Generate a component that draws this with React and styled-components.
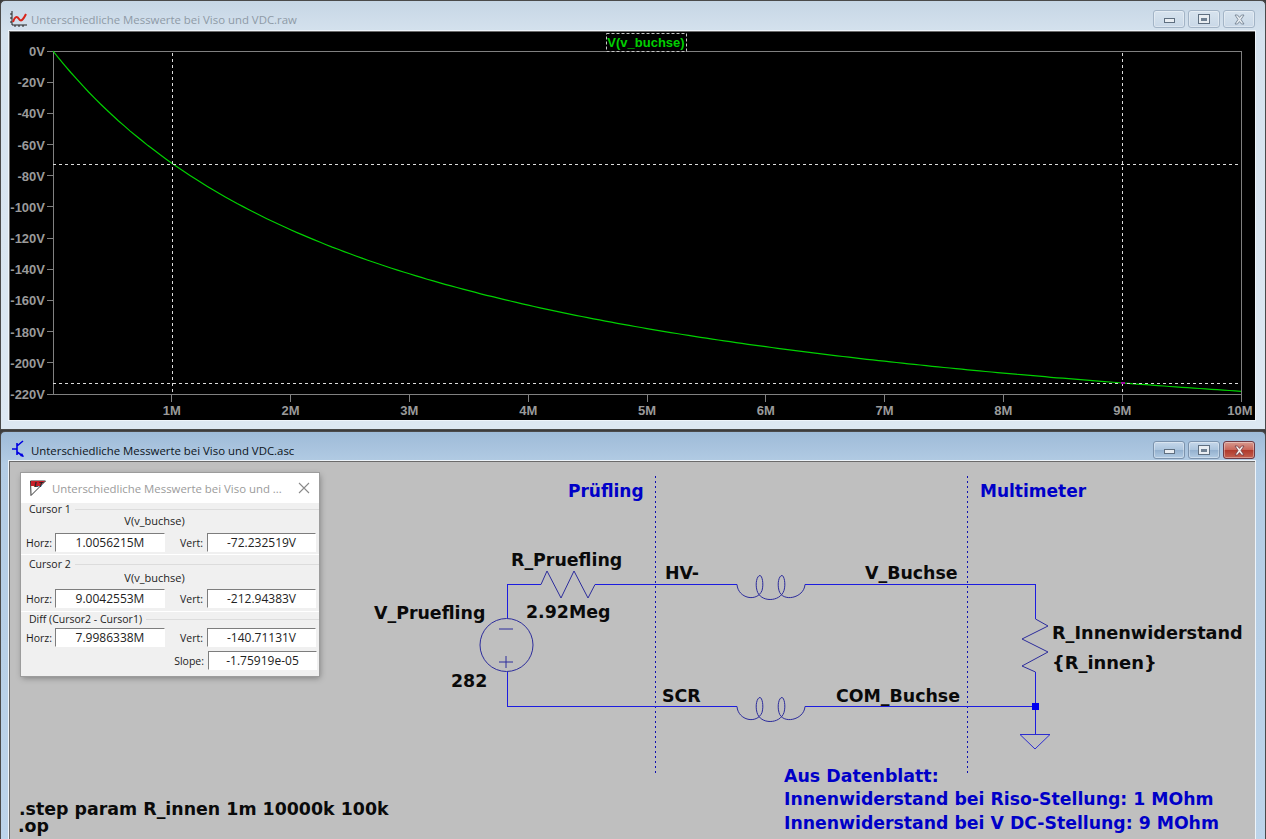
import React from 'react';
import styled, { createGlobalStyle } from 'styled-components';

const GlobalStyle = createGlobalStyle`
  html, body {
    margin: 0;
    height: 100%;
    overflow: hidden;
    background: #3c3c3c;
  }
  * { box-sizing: border-box; }
`;

const Desktop = styled.div`
  width: 1266px;
  height: 839px;
  display: flex;
  flex-direction: column;
  gap: 1px;
  font-family: "Open Sans", "Noto Sans", sans-serif;
`;

const Window = styled.div`
  height: ${(p) => p.$height}px;
  flex: none;
  display: flex;
  flex-direction: column;
  padding: 0 10px ${(p) => (p.$active ? 0 : 9)}px 8px;
  background: ${(p) =>
    p.$active
      ? 'linear-gradient(180deg, #9ebbd8 0, #b3cce4 32px, #bdd4ea 100%)'
      : 'linear-gradient(180deg, #c6d6e5 0, #d5e2ee 32px, #dde8f2 100%)'};
  border: 1px solid #4a4a4a;
  border-width: 1px 1px ${(p) => (p.$active ? 0 : 1)}px 1px;
  border-radius: 5px 5px 0 0;
`;

const TitleBar = styled.div`
  height: ${(p) => (p.$active ? 29 : 30)}px;
  flex: none;
  display: flex;
  align-items: center;
  gap: 3px;
  padding: 5px 0 0 1px;
`;

const TitleText = styled.div`
  flex: 1;
  font-size: 11.4px;
  padding-top: 2px;
  color: ${(p) => (p.$active ? '#0c1420' : '#8e9aa6')};
`;

const Controls = styled.div`
  display: flex;
  gap: 3px;
  align-self: flex-start;
  margin-top: 4px;
`;

const CtrlButton = styled.div`
  width: 32px;
  height: 18px;
  display: flex;
  align-items: center;
  justify-content: center;
  border-radius: 3px;
  border: 1px solid ${(p) => (p.$close ? '#6e3a44' : p.$active ? '#7c93ad' : '#a3b4c6')};
  box-shadow: inset 0 0 0 1px rgba(255, 255, 255, 0.35);
  background: ${(p) =>
    p.$close
      ? 'linear-gradient(180deg, #d79a90 0, #c9675a 48%, #b03a2c 52%, #c4604f 100%)'
      : p.$active
        ? 'linear-gradient(180deg, #c6d8ea 0, #acc5de 48%, #94b1cf 52%, #b2cbe3 100%)'
        : 'linear-gradient(180deg, #d7e3ee 0, #c9d8e7 100%)'};
`;

const MinGlyph = styled.div`
  width: 11px;
  height: 5px;
  margin-top: 3px;
  background: #e8edf2;
  border: 1px solid #5f6f80;
`;

const MaxGlyph = styled.div`
  width: 12px;
  height: 10px;
  background: #e8edf2;
  border: 1px solid #5f6f80;
  display: flex;
  align-items: center;
  justify-content: center;
  &::after {
    content: '';
    width: 6px;
    height: 3px;
    background: #6f8092;
  }
`;

const Client = styled.div`
  flex: 1;
  min-height: 0;
  position: relative;
  overflow: hidden;
  background: ${(p) => p.$bg};
  border: 1px solid #6a6a6a;
  border-width: 1px 0 0 1px;
  outline: 1px solid #eef4fa;
`;

const Drawing = styled.svg`
  display: block;
  width: 100%;
  height: 100%;
  position: absolute;
  inset: 0;
`;

const AxisLabel = styled.text`
  font-family: "Liberation Sans", Arial, sans-serif;
  font-size: 13px;
  font-weight: 700;
  fill: #9a9a9a;
`;

const TraceLabel = styled.text`
  font-family: "Liberation Sans", Arial, sans-serif;
  font-size: 13px;
  font-weight: 700;
  fill: #00d000;
`;

const NetLabel = styled.text`
  font-family: "DejaVu Sans", "Noto Sans", sans-serif;
  font-size: ${(p) => p.$size || 17.4}px;
  font-weight: 700;
  fill: ${(p) => (p.$blue ? '#0000c8' : '#0a0a0a')};
`;

/* cursor readout dialog floats over the schematic */
const CursorDialog = styled.div`
  position: absolute;
  left: 11px;
  top: 11px;
  width: 298px;
  height: 203px;
  background: #f0f0f0;
  box-shadow: 0 0 0 1px #9c9c9c, 1px 2px 6px rgba(0, 0, 0, 0.35);
  display: flex;
  flex-direction: column;
  font-size: 10.5px;
  color: #1c1c1c;
`;

const DialogTitle = styled.div`
  height: 30px;
  flex: none;
  background: #fff;
  display: flex;
  align-items: center;
  gap: 6px;
  padding: 0 9px 0 8px;
  font-size: 11.4px;
  color: #9b9b9b;
`;

const DialogTitleText = styled.div`
  flex: 1;
  white-space: nowrap;
`;

const Group = styled.div`
  position: relative;
  height: ${(p) => p.$height}px;
  padding: ${(p) => p.$top}px 2px 0 5px;
  display: flex;
  flex-direction: column;
  gap: ${(p) => p.$gap}px;
  border-bottom: ${(p) => (p.$last ? 'none' : '1px solid #fff')};
`;

const Legend = styled.div`
  position: absolute;
  left: 0;
  right: 0;
  top: ${(p) => p.$top}px;
  display: flex;
  align-items: center;
  gap: 4px;
  padding-left: 8px;
  line-height: 13px;
  &::after {
    content: '';
    flex: 1;
    height: 1px;
    background: #dcdcdc;
  }
`;

const TraceName = styled.div`
  height: 13px;
  line-height: 13px;
  font-size: 11px;
  text-align: center;
  margin-right: 34px;
`;

const FieldRow = styled.div`
  display: flex;
  align-items: center;
  justify-content: ${(p) => (p.$end ? 'flex-end' : 'flex-start')};
  height: 19px;
  flex: none;
`;

const FieldLabel = styled.div`
  width: ${(p) => p.$width}px;
  text-align: right;
  padding-right: 4px;
`;

const Field = styled.div`
  width: ${(p) => p.$width}px;
  height: 19px;
  line-height: 18px;
  text-align: center;
  background: #fff;
  font-size: 12px;
  border: 1px solid #fff;
  border-top-color: #7d7d7d;
  border-left-color: #7d7d7d;
  color: #222;
`;

const CHART = { left: 53, right: 1241, top: 51, bottom: 394 };
const PX_PER_VOLT = (CHART.bottom - CHART.top) / 220;
const PX_PER_MEG = (CHART.right - CHART.left) / 10;
const voltY = (v) => CHART.top - v * PX_PER_VOLT;
const megX = (m) => CHART.left + m * PX_PER_MEG;
// divider: 282V over 2.92Meg and the meter input
const divider = (m) => (-282 * m) / (m + 2.92);

const curve = Array.from({ length: 201 }, (_, i) => {
  const m = i / 20;
  return `${megX(m).toFixed(1)},${voltY(divider(m)).toFixed(1)}`;
}).join(' ');

const voltTicks = Array.from({ length: 12 }, (_, i) => -20 * i);
const megTicks = [1, 2, 3, 4, 5, 6, 7, 8, 9, 10];

function PlotIcon() {
  return (
    <svg width="18" height="18" viewBox="0 0 18 18">
      <path d="M2 1v14h15M0 4h2M0 8h2M0 12h2M5 15v2M9 15v2M13 15v2" stroke="#222" fill="none" />
      <path d="M3 12c2-6 4-6 6-3s4 1 7-5" stroke="#d8261c" strokeWidth="2" fill="none" />
    </svg>
  );
}

function TransistorIcon() {
  return (
    <svg width="18" height="18" viewBox="-2 0 18 18">
      <path d="M5 3v12M5 9H0M5 6l6-5M5 12l6 4" stroke="#0000e0" strokeWidth="1.6" fill="none" />
      <path d="M12 17l-4-1 2-3z" fill="#0000e0" />
    </svg>
  );
}

function LtIcon() {
  return (
    <svg width="17" height="18" viewBox="0 0 17 18">
      <path d="M1.5 2h15L2 16.5z" fill="#fff" stroke="#333" />
      <path d="M2 2h14l-5 5H2z" fill="#c8202a" />
      <text x="5" y="8" fontSize="8" fontWeight="700" fontStyle="italic" fontFamily="Liberation Sans" fill="#222">
        LT
      </text>
    </svg>
  );
}

function CloseGlyph({ color = '#6b7a8a', fill = '#e6ebf0' }) {
  return (
    <svg width="13" height="11" viewBox="0 0 13 11">
      <path d="M2 1h2.5l2 2.4L8.5 1H11L8 5.5 11 10H8.5l-2-2.4-2 2.4H2l3-4.5z" fill={fill} stroke={color} strokeWidth="0.8" />
    </svg>
  );
}

function WindowControls({ active }) {
  return (
    <Controls>
      <CtrlButton $active={active}>
        <MinGlyph />
      </CtrlButton>
      <CtrlButton $active={active}>
        <MaxGlyph />
      </CtrlButton>
      <CtrlButton $active={active} $close={active}>
        <CloseGlyph color={active ? '#6e3a44' : '#6b7a8a'} fill={active ? '#f4ecea' : '#e6ebf0'} />
      </CtrlButton>
    </Controls>
  );
}

function Plot() {
  const cursors = [
    { m: 1.0056215, v: -72.232519 },
    { m: 9.0042553, v: -212.94383 },
  ];
  return (
    <Drawing viewBox="10 32 1245 388" preserveAspectRatio="xMinYMin meet">
      <g stroke="#808080" fill="none" shapeRendering="crispEdges">
        <rect x={CHART.left} y={CHART.top} width={CHART.right - CHART.left} height={CHART.bottom - CHART.top} />
        {voltTicks.map((v) => (
          <line key={v} x1={CHART.left - 6} x2={CHART.left} y1={voltY(v)} y2={voltY(v)} />
        ))}
        {megTicks.map((m) => (
          <line key={m} x1={megX(m)} x2={megX(m)} y1={CHART.bottom} y2={CHART.bottom + 8} />
        ))}
      </g>
      {voltTicks.map((v) => (
        <AxisLabel key={v} x={45} y={voltY(v) + 5} textAnchor="end">
          {v}V
        </AxisLabel>
      ))}
      {megTicks.map((m) => (
        <AxisLabel key={m} x={m === 10 ? megX(m) - 1 : megX(m)} y={415} textAnchor="middle">
          {m}M
        </AxisLabel>
      ))}
      <polyline points={curve} fill="none" stroke="#00d000" strokeWidth="1.2" />
      <g stroke="#dcdcdc" strokeDasharray="3 3" shapeRendering="crispEdges">
        {cursors.map((c) => (
          <React.Fragment key={c.m}>
            <line x1={megX(c.m)} x2={megX(c.m)} y1={CHART.top + 2} y2={CHART.bottom} />
            <line x1={CHART.left} x2={CHART.right} y1={voltY(c.v) + 0.5} y2={voltY(c.v) + 0.5} />
          </React.Fragment>
        ))}
      </g>
      <rect x="1121" y="382" width="4" height="2" fill="#a000a0" />
      <rect x="606.5" y="33.5" width="80" height="18" fill="#000" stroke="#c8c8c8" strokeDasharray="3 2" />
      <TraceLabel x="646" y="47" textAnchor="middle">
        V(v_buchse)
      </TraceLabel>
    </Drawing>
  );
}

const COIL =
  'c1,14 20,18 25,6 c2,-7 0,-15 -2,-15 c-3,0 -5,8 -3,15 c3,12 23,12 27,0 c2,-7 0,-15 -2,-15 c-3,0 -5,8 -3,15 c3,12 25,8 26,-6';

const netLabels = [
  ['R_Pruefling', 511, 566],
  ['2.92Meg', 526, 618],
  ['V_Pruefling', 374, 619],
  ['282', 451, 687],
  ['HV-', 665, 579],
  ['SCR', 662, 702],
  ['V_Buchse', 865, 579],
  ['COM_Buchse', 836, 702],
  ['R_Innenwiderstand', 1052, 639, 17.7],
  ['{R_innen}', 1052, 669, 17.9],
  ['.step param R_innen 1m 10000k 100k', 19, 815],
  ['.op', 18, 832],
];

const noteLabels = [
  ['Prüfling', 568, 497, 17],
  ['Multimeter', 980, 497, 17],
  ['Aus Datenblatt:', 784, 782],
  ['Innenwiderstand bei Riso-Stellung: 1 MOhm', 784, 805, 17.3],
  ['Innenwiderstand bei V DC-Stellung: 9 MOhm', 784, 829, 17.3],
];

function Schematic() {
  return (
    <Drawing viewBox="10 462 1245 377" preserveAspectRatio="xMinYMin meet">
      <g stroke="#1010b0" strokeDasharray="2 3" shapeRendering="crispEdges">
        <line x1="655.5" x2="655.5" y1="476" y2="775" />
        <line x1="967.5" x2="967.5" y1="476" y2="775" />
      </g>
      <g stroke="#1c1ce0" fill="none" strokeWidth="1" shapeRendering="crispEdges">
        <path d="M507.5 618V584.5H541M595 584.5H737M805 584.5H1035.5V619" />
        <path d="M507.5 672V706.5H737M805 706.5H1035.5M1035.5 672V734" />
      </g>
      <g stroke="#2c2c9c" fill="none" strokeWidth="1">
        <circle cx="506.5" cy="645" r="26.5" />
        <path d="M499 629h14M499 662h14M506 656v12" />
        <path d="M541 584.5L547 571L561 598L574 571L588 598L595 584.5" />
        <path d={`M737 584.5${COIL}`} />
        <path d={`M737 706.5${COIL}`} />
        <path d="M1035.5 619L1048 626L1022 639L1048 652L1022 666L1035.5 672" />
      </g>
      <rect x="1032" y="703" width="7" height="7" fill="#0000f0" />
      <path d="M1020 734.5H1050L1035 749Z" fill="none" stroke="#2c2cd0" />
      {netLabels.map(([text, x, y, size]) => (
        <NetLabel key={text} x={x} y={y} $size={size}>
          {text}
        </NetLabel>
      ))}
      {noteLabels.map(([text, x, y, size]) => (
        <NetLabel key={text} x={x} y={y} $size={size} $blue>
          {text}
        </NetLabel>
      ))}
    </Drawing>
  );
}

function CursorRow({ horz, vert }) {
  return (
    <FieldRow>
      <FieldLabel $width={29}>Horz:</FieldLabel>
      <Field $width={110}>{horz}</Field>
      <FieldLabel $width={42}>Vert:</FieldLabel>
      <Field $width={109}>{vert}</Field>
    </FieldRow>
  );
}

function Readout() {
  return (
    <CursorDialog>
      <DialogTitle>
        <LtIcon />
        <DialogTitleText>Unterschiedliche Messwerte bei Viso und ...</DialogTitleText>
        <svg width="12" height="12" viewBox="0 0 12 12">
          <path d="M1 1l10 10M11 1L1 11" stroke="#8a8a8a" strokeWidth="1.1" />
        </svg>
      </DialogTitle>
      <Group $height={52} $top={11} $gap={6}>
        <Legend $top={0}>Cursor 1</Legend>
        <TraceName>V(v_buchse)</TraceName>
        <CursorRow horz="1.0056215M" vert="-72.232519V" />
      </Group>
      <Group $height={57} $top={16} $gap={5}>
        <Legend $top={3}>Cursor 2</Legend>
        <TraceName>V(v_buchse)</TraceName>
        <CursorRow horz="9.0042553M" vert="-212.94383V" />
      </Group>
      <Group $height={64} $top={16} $gap={4} $last>
        <Legend $top={1}>Diff (Cursor2 - Cursor1)</Legend>
        <CursorRow horz="7.9986338M" vert="-140.71131V" />
        <FieldRow $end>
          <FieldLabel $width={50}>Slope:</FieldLabel>
          <Field $width={109}>-1.75919e-05</Field>
        </FieldRow>
      </Group>
    </CursorDialog>
  );
}

export default function App() {
  return (
    <Desktop>
      <GlobalStyle />
      <Window $height={430}>
        <TitleBar>
          <PlotIcon />
          <TitleText>Unterschiedliche Messwerte bei Viso und VDC.raw</TitleText>
          <WindowControls />
        </TitleBar>
        <Client $bg="#000">
          <Plot />
        </Client>
      </Window>
      <Window $height={408} $active>
        <TitleBar $active>
          <TransistorIcon />
          <TitleText $active>Unterschiedliche Messwerte bei Viso und VDC.asc</TitleText>
          <WindowControls active />
        </TitleBar>
        <Client $bg="#bfbfbf">
          <Schematic />
          <Readout />
        </Client>
      </Window>
    </Desktop>
  );
}
